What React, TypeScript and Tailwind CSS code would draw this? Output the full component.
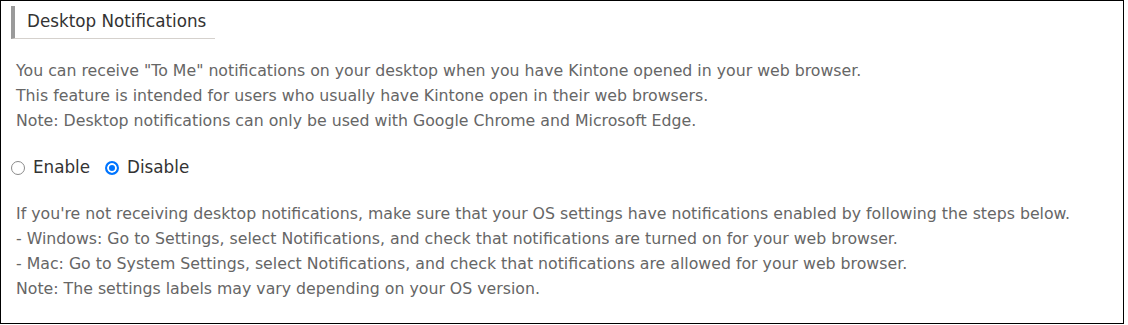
import React from "react";

const radioCls =
  "appearance-none w-[14px] h-[14px] rounded-full border-[1.5px] border-[#8a8a8a] bg-white checked:border-[#0075ff] checked:border-[2px] checked:bg-[#0075ff] checked:shadow-[inset_0_0_0_2px_white] shrink-0";

export default function App() {
  return (
    <div className="w-[1124px] h-[324px] border border-black bg-white font-['DejaVu_Sans',sans-serif] text-[#666]">
      <div className="ml-[10px] mt-[5px] w-[204px] h-[33px] border-l-[4px] border-l-[#9a9a9a] border-b border-b-[#d5d1cd] pl-[12px] flex items-center text-[16.75px] text-[#333]">
        Desktop Notifications
      </div>
      <div className="mt-[19px] pl-[15px] text-[15.75px] leading-[25px]">
        <p>You can receive "To Me" notifications on your desktop when you have Kintone opened in your web browser.</p>
        <p>This feature is intended for users who usually have Kintone open in their web browsers.</p>
        <p>Note: Desktop notifications can only be used with Google Chrome and Microsoft Edge.</p>
      </div>
      <div className="mt-[22px] pl-[5px] flex items-center text-[16.75px] text-[#333] h-[25px]">
        <label className="flex items-center">
          <input type="radio" name="dn" className={"ml-[5px] " + radioCls} />
          <span className="ml-[8px]">Enable</span>
        </label>
        <label className="flex items-center ml-[15px]">
          <input type="radio" name="dn" defaultChecked className={radioCls} />
          <span className="ml-[8px]">Disable</span>
        </label>
      </div>
      <div className="mt-[21px] pl-[15px] text-[15.75px] leading-[25px]">
        <p>If you're not receiving desktop notifications, make sure that your OS settings have notifications enabled by following the steps below.</p>
        <p>- Windows: Go to Settings, select Notifications, and check that notifications are turned on for your web browser.</p>
        <p>- Mac: Go to System Settings, select Notifications, and check that notifications are allowed for your web browser.</p>
        <p>Note: The settings labels may vary depending on your OS version.</p>
      </div>
    </div>
  );
}
